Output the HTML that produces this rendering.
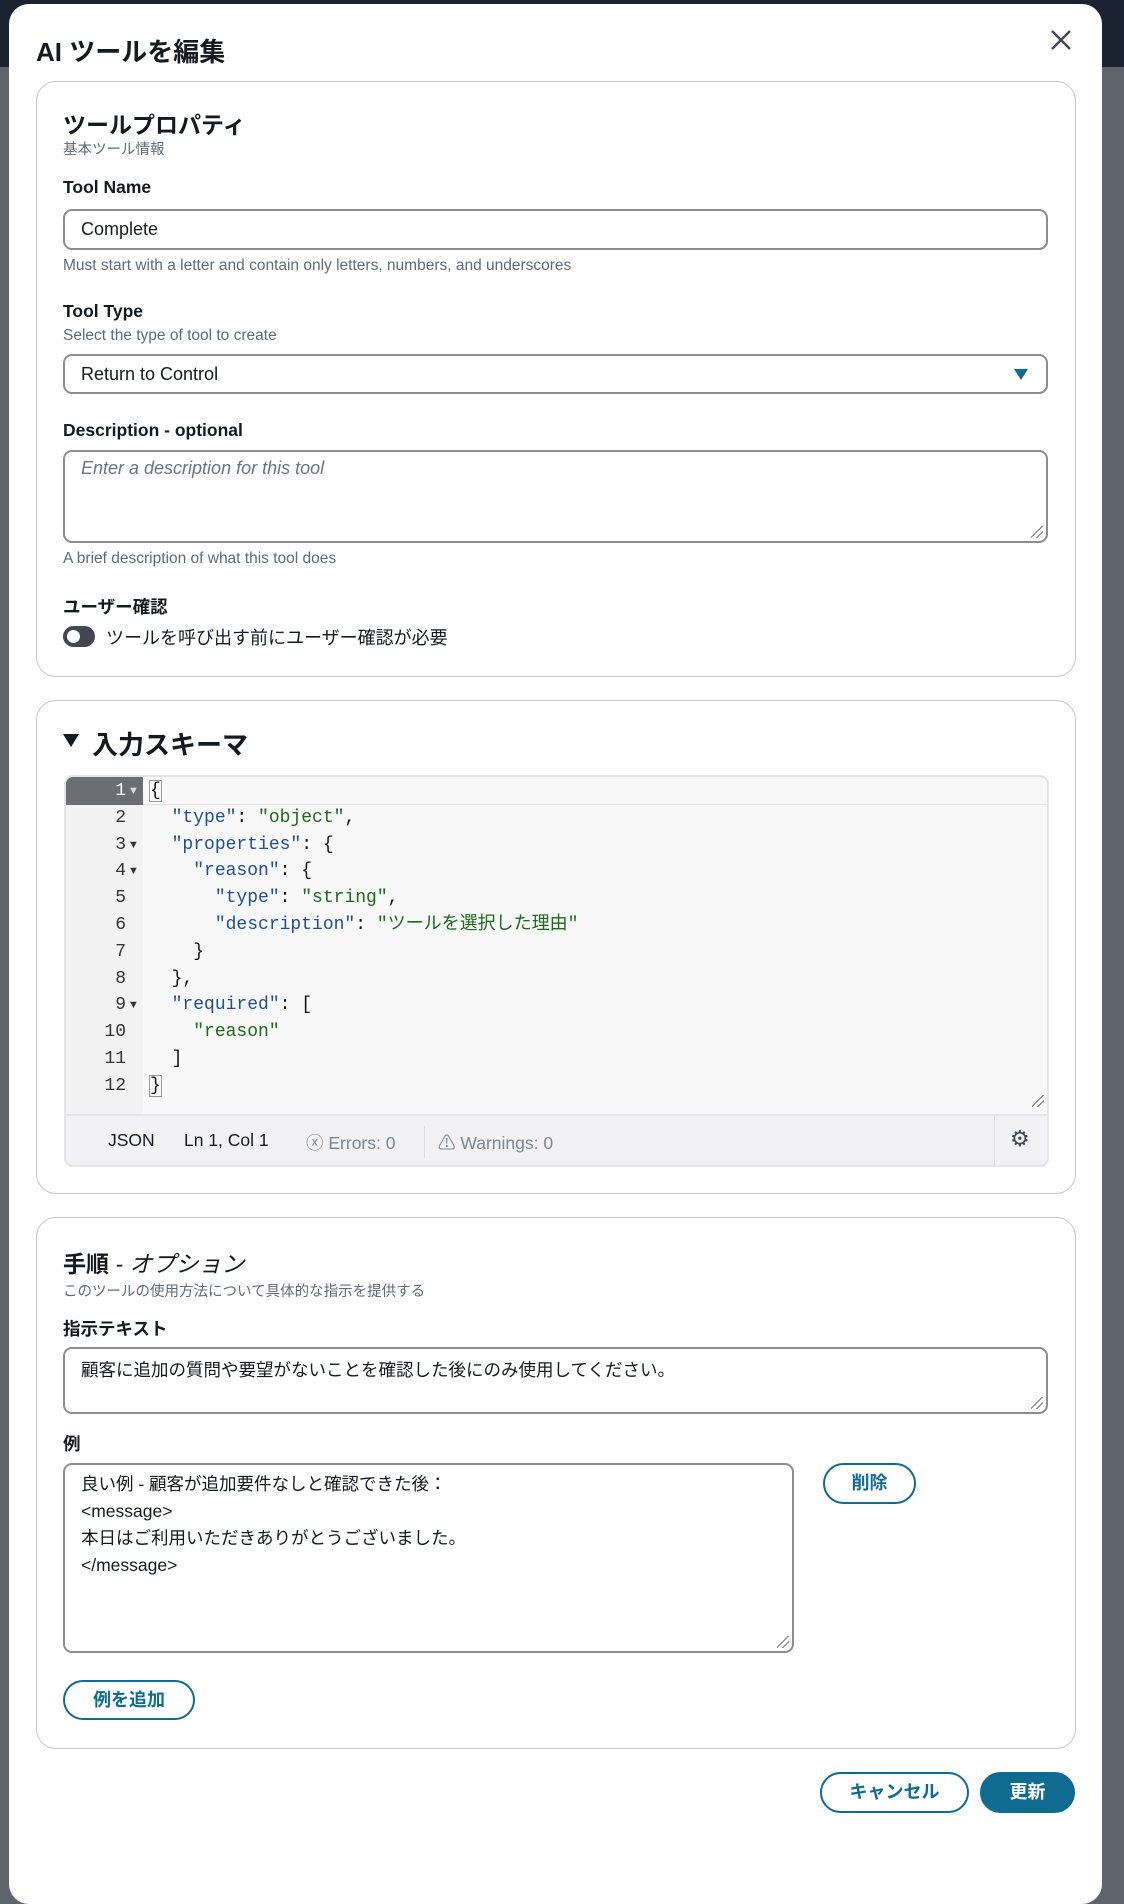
<!DOCTYPE html>
<html><head><meta charset="utf-8"><style>
*{box-sizing:border-box;margin:0;padding:0}
body{width:1124px;height:1830px;overflow:hidden;background:#5f636b;font-family:"Liberation Sans","Noto Sans CJK JP",sans-serif;color:#16191f;position:relative}
.topbar{position:absolute;left:0;top:0;width:1124px;height:67px;background:#1b2331}
.modal{position:absolute;left:9px;top:4px;width:1093px;height:1900px;background:#fff;border-radius:20px}
.abs{position:absolute}
.card{position:absolute;left:27px;width:1040px;border:1.5px solid #c6c6cd;border-radius:20px;background:#fff}
.h2{font-size:23px;font-weight:bold}
.sub{font-size:14.5px;color:#5f6b7a}
.lbl{font-size:17.5px;font-weight:bold}
.input{position:absolute;border:2px solid #8c8c94;border-radius:9px;background:#fff;font-size:18px;padding-left:16px}
.help{font-size:15.5px;color:#5f6b7a}
.btn{position:absolute;border:2px solid #0f6b8f;border-radius:22px;color:#0f6b8f;font-weight:bold;font-size:18px;text-align:center;background:#fff}
.code div{height:26.8px;line-height:26.8px;white-space:pre}
.k{color:#1d4e9e}.s{color:#1a6b1a}
.grip{position:absolute;right:3px;bottom:3px;width:12px;height:12px;background:linear-gradient(135deg,transparent 45%,#777 45%,#777 52%,transparent 52%,transparent 70%,#777 70%,#777 77%,transparent 77%)}
</style></head><body>
<div class="topbar"></div>
<div class="modal">
<div class="abs" style="left:27px;top:28px;font-size:26px;font-weight:bold">AI ツールを編集</div>
<svg class="abs" style="left:1041px;top:25px" width="22" height="22" viewBox="0 0 22 22"><path d="M2 2L20 20M20 2L2 20" stroke="#414750" stroke-width="2.4" fill="none"/></svg>

<div class="card" style="top:77px;height:596px">
 <div class="abs h2" style="left:26px;top:24px">ツールプロパティ</div>
 <div class="abs sub" style="left:26px;top:56px">基本ツール情報</div>
 <div class="abs lbl" style="left:26px;top:95px">Tool Name</div>
 <div class="input" style="left:26px;top:127px;width:985px;height:41px;line-height:37px">Complete</div>
 <div class="abs help" style="left:26px;top:175px">Must start with a letter and contain only letters, numbers, and underscores</div>
 <div class="abs lbl" style="left:26px;top:219px">Tool Type</div>
 <div class="abs help" style="left:26px;top:245px">Select the type of tool to create</div>
 <div class="input" style="left:26px;top:272px;width:985px;height:40px;line-height:36px">Return to Control
  <svg class="abs" style="right:18px;top:13px" width="14" height="11" viewBox="0 0 14 11"><path d="M0 0H14L7 11Z" fill="#0f6b8f"/></svg></div>
 <div class="abs lbl" style="left:26px;top:338px">Description - optional</div>
 <div class="input" style="left:26px;top:368px;width:985px;height:93px;padding-top:6px;font-style:italic;color:#6b7480">Enter a description for this tool<div class="grip"></div></div>
 <div class="abs help" style="left:26px;top:468px">A brief description of what this tool does</div>
 <div class="abs lbl" style="left:26px;top:512px">ユーザー確認</div>
 <div class="abs" style="left:26px;top:544px;width:32px;height:21px;border-radius:11px;background:#414750"><div style="position:absolute;left:4px;top:4px;width:13px;height:13px;border-radius:50%;background:#fff"></div></div>
 <div class="abs" style="left:69px;top:542px;font-size:18px">ツールを呼び出す前にユーザー確認が必要</div>
</div>

<div class="card" style="top:696px;height:494px">
 <svg class="abs" style="left:26px;top:33px" width="16" height="13" viewBox="0 0 16 13"><path d="M0 0H16L8 13Z" fill="#16191f"/></svg>
 <div class="abs" style="left:55px;top:24px;font-size:26px;font-weight:bold">入力スキーマ</div>
 <div class="abs" style="left:27px;top:74px;width:985px;height:392px;border:2px solid #e3e3e8;border-radius:9px;background:#f8f8f8;overflow:hidden">
  <div class="abs" style="left:0;top:0;width:77px;height:337px;background:#f2f2f2"></div>
  <div class="abs" style="left:0;top:0;width:983px;height:28px;border-bottom:1px solid #e3e3e3"></div>
  <div class="abs" style="left:0;top:0;width:77px;height:28px;background:#6b6e75"></div>
  <div class="abs code" style="left:0;top:1px;width:60px;text-align:right;font-family:'Liberation Mono','DejaVu Sans Mono',monospace;font-size:18px;color:#333">
   <div style="color:#fff">1</div><div>2</div><div>3</div><div>4</div><div>5</div><div>6</div><div>7</div><div>8</div><div>9</div><div>10</div><div>11</div><div>12</div></div>
  <div class="abs" style="left:62px;top:1px;font-size:11px;line-height:26.8px;color:#333">
   <div style="color:#ddd">▼</div><div>&nbsp;</div><div>▼</div><div>▼</div><div>&nbsp;</div><div>&nbsp;</div><div>&nbsp;</div><div>&nbsp;</div><div>▼</div></div>
  <div class="abs code" style="left:84px;top:1px;font-family:'Liberation Mono','DejaVu Sans Mono',monospace;font-size:18px;color:#111">
<div><span style="outline:1px solid #999">{</span></div>
<div>  <span class="k">"type"</span>: <span class="s">"object"</span>,</div>
<div>  <span class="k">"properties"</span>: {</div>
<div>    <span class="k">"reason"</span>: {</div>
<div>      <span class="k">"type"</span>: <span class="s">"string"</span>,</div>
<div>      <span class="k">"description"</span>: <span class="s">"ツールを選択した理由"</span></div>
<div>    }</div>
<div>  },</div>
<div>  <span class="k">"required"</span>: [</div>
<div>    <span class="s">"reason"</span></div>
<div>  ]</div>
<div><span style="outline:1px solid #999">}</span></div>
  </div>
  <div class="grip" style="bottom:58px"></div>
  <div class="abs" style="left:0;top:337px;width:983px;height:53px;background:#f2f2f5;border-top:2px solid #e3e3e8;font-size:17.5px">
   <div class="abs" style="left:42px;top:14px">JSON</div>
   <div class="abs" style="left:118px;top:14px">Ln 1, Col 1</div>
   <div class="abs" style="left:240px;top:14px;color:#7d8590">ⓧ Errors: 0</div>
   <div class="abs" style="left:358px;top:10px;width:1px;height:32px;background:#ddd"></div>
   <div class="abs" style="left:372px;top:14px;color:#7d8590">⚠ Warnings: 0</div>
   <div class="abs" style="left:928px;top:0;width:1px;height:51px;background:#ddd"></div>
   <div class="abs" style="left:944px;top:10px;font-size:22px;color:#414750">⚙</div>
  </div>
 </div>
</div>

<div class="card" style="top:1213px;height:532px">
 <div class="abs h2" style="left:26px;top:27px">手順 <span style="font-weight:normal;font-style:italic">- オプション</span></div>
 <div class="abs sub" style="left:26px;top:62px">このツールの使用方法について具体的な指示を提供する</div>
 <div class="abs lbl" style="left:26px;top:98px">指示テキスト</div>
 <div class="input" style="left:26px;top:129px;width:985px;height:67px;padding-top:8px;font-size:17.5px">顧客に追加の質問や要望がないことを確認した後にのみ使用してください。<div class="grip"></div></div>
 <div class="abs lbl" style="left:26px;top:213px">例</div>
 <div class="input" style="left:26px;top:245px;width:731px;height:190px;padding-top:6px;font-size:17.5px;line-height:27px">良い例 - 顧客が追加要件なしと確認できた後：<br>&lt;message&gt;<br>本日はご利用いただきありがとうございました。<br>&lt;/message&gt;<div class="grip"></div></div>
 <div class="btn" style="left:786px;top:245px;width:93px;height:41px;line-height:37px">削除</div>
 <div class="btn" style="left:26px;top:462px;width:132px;height:40px;line-height:36px">例を追加</div>
</div>

<div class="btn" style="left:811px;top:1768px;width:149px;height:41px;line-height:37px">キャンセル</div>
<div class="btn" style="left:971px;top:1768px;width:95px;height:41px;line-height:37px;background:#0f6b8f;color:#fff">更新</div>
</div>
</body></html>
